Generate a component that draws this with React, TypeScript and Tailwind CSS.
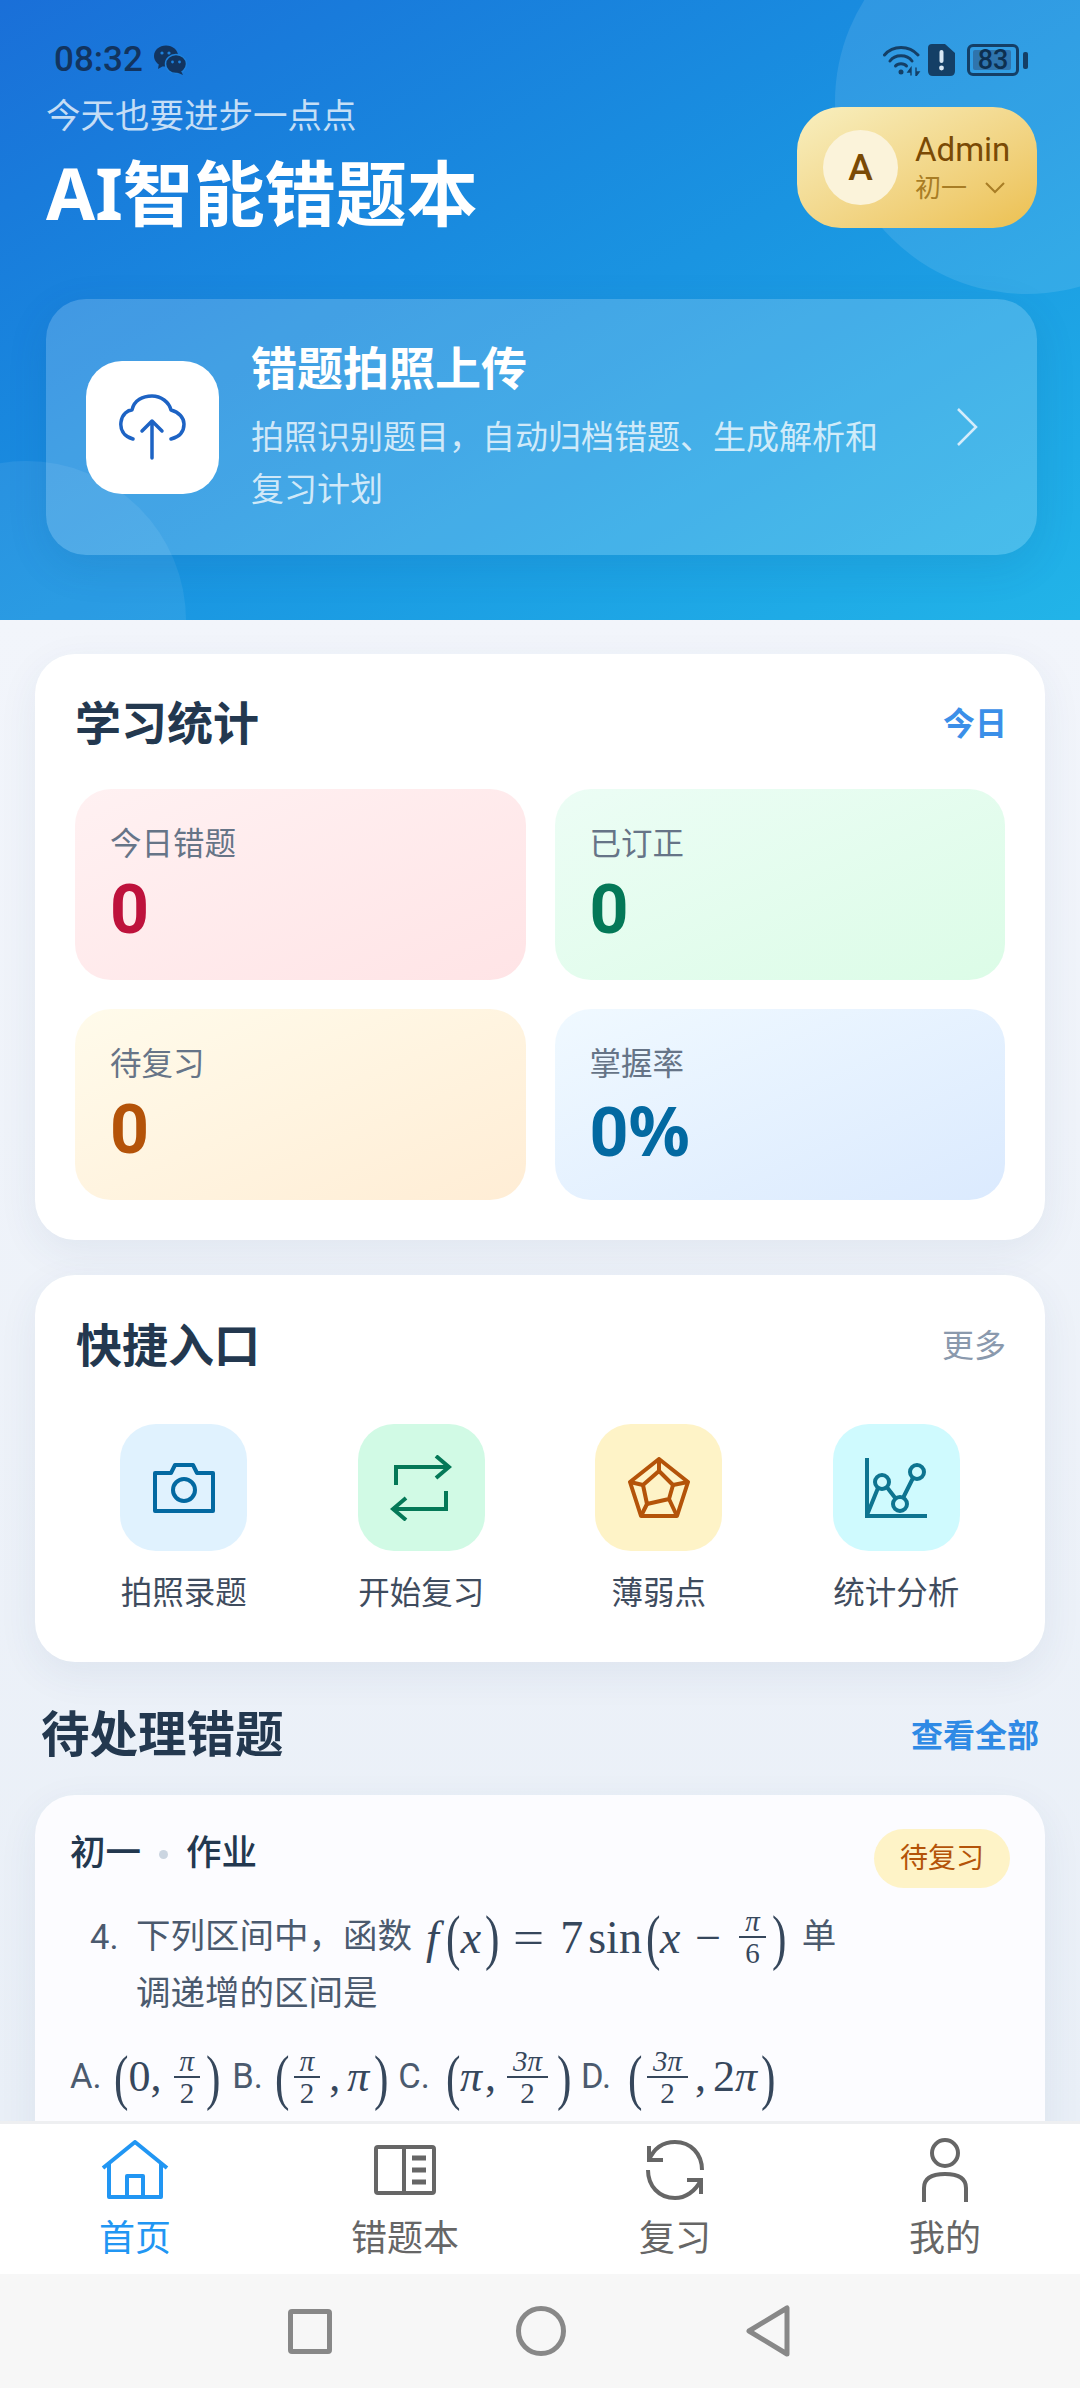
import React from 'react';

const sans = 'font-["Roboto","Noto_Sans_CJK_SC",sans-serif]';
const math = 'font-["Liberation_Serif","DejaVu_Serif",serif]';

const Frac: React.FC<{ top: string; bottom: string; className?: string }> = ({ top, bottom, className }) => (
    <span className={`inline-flex flex-col items-center text-[29px] leading-[26px] ${math} ${className ?? ''}`}>
        <span className="px-[6px] italic">{top}</span>
        <span className="block w-full h-[2px] bg-current my-[2px]" />
        <span className="px-[6px]">{bottom}</span>
    </span>
);

const Paren: React.FC<{ ch: string; className?: string }> = ({ ch, className }) => (
    <span className={`inline-flex w-[14px] justify-center text-[62px] leading-[62px] font-light ${math} ${className ?? ''}`}>
        <span className="inline-block scale-x-[0.7]">{ch}</span>
    </span>
);

const StatCard: React.FC<{ label: string; value: string; unit?: string; bg: string; color: string }> = ({ label, value, unit, bg, color }) => (
    <div className={`h-[191px] rounded-[36px] pl-[35px] pt-[34px] ${bg}`}>
        <div className="text-[31.5px] leading-[44px] text-[#667487]">{label}</div>
        <div className={`text-[68px] leading-[76px] font-bold mt-[5px] ${color}`}>
            {value}
            {unit && <span className='font-["Noto_Sans",sans-serif]'>{unit}</span>}
        </div>
    </div>
);

const QuickItem: React.FC<{ label: string; bg: string; children: React.ReactNode }> = ({ label, bg, children }) => (
    <div className="flex flex-col items-center">
        <div className={`w-[127px] h-[127px] rounded-[36px] flex items-center justify-center ${bg}`}>{children}</div>
        <div className="mt-[21px] text-[31.5px] leading-[44px] text-[#3f4c5e]">{label}</div>
    </div>
);

const NavItem: React.FC<{ label: string; active?: boolean; children: React.ReactNode }> = ({ label, active, children }) => (
    <div className={`flex flex-col items-center ${active ? 'text-[#2196f3]' : 'text-[#666666]'}`}>
        <div className="h-[72px] flex items-center justify-center">{children}</div>
        <div className="text-[36px] leading-[48px] mt-[9px]">{label}</div>
    </div>
);

const App: React.FC = () => {
    return (
        <div className={`w-[1080px] h-[2388px] flex flex-col overflow-hidden bg-[#eef3fa] ${sans}`}>
            {/* header */}
            <div className="relative h-[620px] shrink-0 overflow-hidden bg-gradient-to-br from-[#1a6fd8] to-[#22b4e8]">
                <div className="absolute left-[835px] top-[-90px] w-[384px] h-[384px] rounded-full bg-white/10" />
                <div className="absolute left-[-134px] top-[461px] w-[320px] h-[320px] rounded-full bg-white/[0.07]" />

                <div className="relative flex items-center justify-between h-[36px] mt-[42px] pl-[54px] pr-[52px] text-[#12345f]">
                    <div className="flex items-center gap-[11px]">
                        <span className="text-[35px] leading-[36px] font-medium">08:32</span>
                        <svg width="33" height="30" viewBox="0 0 33 30" fill="currentColor">
                            <ellipse cx="12" cy="11" rx="12" ry="10.5" />
                            <path d="M5 18 L4 24 L11 20Z" />
                            <ellipse cx="22" cy="19" rx="10.5" ry="9.5" stroke="#1f82dd" strokeWidth="1.5" />
                            <path d="M27 26 L29 30 L22 27Z" />
                            <circle cx="8" cy="8" r="1.6" fill="#1f82dd" />
                            <circle cx="15" cy="8" r="1.6" fill="#1f82dd" />
                            <circle cx="18.5" cy="17" r="1.4" fill="#1f82dd" />
                            <circle cx="25.5" cy="17" r="1.4" fill="#1f82dd" />
                        </svg>
                    </div>
                    <div className="flex items-center text-[#143f66]">
                        <svg width="38" height="32" viewBox="0 0 38 32" fill="none" stroke="currentColor" strokeWidth="3" strokeLinecap="round">
                            <path d="M1.5 11 C10 1 26 1 35 11" />
                            <path d="M7 17 C12 10 24 10 29 17" />
                            <path d="M12.5 22 C15 19 21 19 23.5 22" />
                            <circle cx="18" cy="28" r="2.5" fill="currentColor" stroke="none" />
                            <path d="M28 24 L25 28 H28Z M33 32 L36 28 H33Z M28 24 V31 M33 24 V31" strokeWidth="1.4" fill="currentColor" />
                        </svg>
                        <svg className="ml-[7px]" width="27" height="32" viewBox="0 0 27 32">
                            <path d="M4 0 H17 L27 9 V27 Q27 32 22 32 H5 Q0 32 0 27 V4 Q0 0 4 0Z" fill="#143f66" />
                            <rect x="11.5" y="6" width="4" height="13" rx="2" fill="#d8e8f5" />
                            <circle cx="13.5" cy="24" r="2.4" fill="#d8e8f5" />
                        </svg>
                        <div className="ml-[12px] w-[52px] h-[32px] rounded-[6px] border-[3px] border-[#143f66] p-[3px] relative">
                            <div className="h-full w-[38px] rounded-[2px] bg-[#2f74ad]" />
                            <span className="absolute inset-0 flex items-center justify-center text-[27px] leading-none text-[#0d2f50] font-medium">83</span>
                        </div>
                        <div className="ml-[4px] w-[5px] h-[17px] rounded-[2px] bg-[#143f66]" />
                    </div>
                </div>

                <div className="relative flex justify-between h-[121px] pl-[46px] pr-[43px] mt-[29px]">
                    <div className="mt-[-11px]">
                        <div className="text-[34.5px] leading-[40px] text-white/75">今天也要进步一点点</div>
                        <div className="text-[71px] leading-[84px] font-bold text-white mt-[15px]">
                            <span className='font-["Noto_Sans",sans-serif]'>AI</span>智能错题本
                        </div>
                    </div>
                    <div className="w-[240px] h-[121px] rounded-[44px] bg-gradient-to-br from-[#f8efbf] to-[#ecc04f] flex items-center pl-[26px]">
                        <div className="w-[75px] h-[75px] rounded-full bg-[#fbf3da] flex items-center justify-center text-[37px] font-medium text-[#7a4a05]">A</div>
                        <div className="ml-[17px]">
                            <div className="text-[33px] leading-[40px] text-[#7a4a05]">Admin</div>
                            <div className="flex items-center text-[26px] leading-[36px] text-[#a87d25]">
                                初一
                                <svg className="ml-[18px]" width="20" height="12" viewBox="0 0 20 12" fill="none" stroke="currentColor" strokeWidth="2">
                                    <path d="M1 1 L10 10 L19 1" />
                                </svg>
                            </div>
                        </div>
                    </div>
                </div>

                <div className="relative mx-[46px] mt-[71px] w-[991px] h-[256px] rounded-[40px] bg-white/[0.18] shadow-[0_12px_40px_rgba(20,70,130,0.12)] flex items-center pl-[40px]">
                    <div className="w-[133px] h-[133px] rounded-[36px] bg-white flex items-center justify-center shrink-0">
                        <svg width="67" height="66" viewBox="0 0 67 66" fill="none" stroke="#1d63c4" strokeWidth="3.5" strokeLinecap="round" strokeLinejoin="round">
                            <path d="M14 45 C4 42 1 35 2 28 C3 20 9 16 13 16 C15 6 24 2 33 2 C42 2 50 8 52 16 C60 18 65 24 65 30 C65 38 60 43 52 45" />
                            <path d="M33 64 V27 M23 37 L33 27 L43 37" />
                        </svg>
                    </div>
                    <div className="ml-[32px] w-[660px]">
                        <div className="text-[46px] leading-[60px] font-bold text-white">错题拍照上传</div>
                        <div className="text-[33px] leading-[52px] text-white/75 mt-[13px] w-[640px]">拍照识别题目，自动归档错题、生成解析和复习计划</div>
                    </div>
                    <svg className="ml-[45px]" width="22" height="38" viewBox="0 0 22 38" fill="none" stroke="#d4ecfb" strokeWidth="2.5">
                        <path d="M2 1 L20 19 L2 37" />
                    </svg>
                </div>
            </div>

            {/* content */}
            <div className="flex-1 overflow-hidden px-[35px] pt-[34px] bg-gradient-to-b from-[#f2f5fb] to-[#e9eff7]">
                <div className="rounded-[40px] bg-white shadow-[0_12px_40px_rgba(40,70,110,0.07)] px-[40px] pt-[40px] pb-[40px]">
                    <div className="flex items-center justify-between h-[60px] mb-[35px]">
                        <div className="text-[46px] font-bold text-[#23384f]">学习统计</div>
                        <div className="text-[32px] font-semibold text-[#3b8fe8] mr-[-2px]">今日</div>
                    </div>
                    <div className="grid grid-cols-2 gap-[29px]">
                        <StatCard label="今日错题" value="0" color="text-[#be123c]" bg="bg-gradient-to-br from-[#fff1f2] to-[#ffe4e6]" />
                        <StatCard label="已订正" value="0" color="text-[#047857]" bg="bg-gradient-to-br from-[#ecfdf5] to-[#dcfce7]" />
                        <StatCard label="待复习" value="0" color="text-[#b45309]" bg="bg-gradient-to-br from-[#fffbeb] to-[#ffedd5]" />
                        <StatCard label="掌握率" value="0" unit="%" color="text-[#0369a1]" bg="bg-gradient-to-br from-[#f0f9ff] to-[#dbeafe]" />
                    </div>
                </div>

                <div className="mt-[35px] rounded-[40px] bg-white shadow-[0_12px_40px_rgba(40,70,110,0.07)] px-[30px] pt-[41px] pb-[46px]">
                    <div className="flex items-center justify-between h-[60px] mb-[48px] pl-[11px] pr-[9px]">
                        <div className="text-[46px] font-bold text-[#23384f]">快捷入口</div>
                        <div className="text-[32px] text-[#8a99ad]">更多</div>
                    </div>
                    <div className="grid grid-cols-4">
                        <QuickItem label="拍照录题" bg="bg-[#e0f2fe]">
                            <svg width="62" height="50" viewBox="0 0 62 50" fill="none" stroke="#0369a1" strokeWidth="4" strokeLinejoin="round">
                                <path d="M2 10 H18 L22 2 H40 L44 10 H60 V48 H2Z" />
                                <circle cx="31" cy="27" r="11" />
                            </svg>
                        </QuickItem>
                        <QuickItem label="开始复习" bg="bg-[#d1fae5]">
                            <svg width="62" height="66" viewBox="0 0 62 66" fill="none" stroke="#047857" strokeWidth="4">
                                <path d="M6 30 V12 H58 M46 1 L59 12 L46 23" />
                                <path d="M56 36 V54 H4 M16 43 L3 54 L16 65" />
                            </svg>
                        </QuickItem>
                        <QuickItem label="薄弱点" bg="bg-[#fef3c7]">
                            <svg width="62" height="62" viewBox="0 0 62 62" fill="none" stroke="#b45309" strokeWidth="4" strokeLinejoin="round">
                                <path d="M31 2 L60 25 L49 59 H13 L2 25Z" />
                                <path d="M31 2 V14 M60 25 L45 28 M49 59 L41 42 M13 59 L19 47 M2 25 L15 28" />
                                <path d="M31 14 L45 28 L41 42 L19 47 L15 28Z" />
                            </svg>
                        </QuickItem>
                        <QuickItem label="统计分析" bg="bg-[#cffafe]">
                            <svg width="64" height="62" viewBox="0 0 64 62" fill="none" stroke="#0e7490" strokeWidth="4">
                                <path d="M3 1 V59 H63" />
                                <path d="M3 58 L14 31 M22 29 L32 42 M39 41 L49 21" />
                                <circle cx="18" cy="25" r="7" />
                                <circle cx="36" cy="47" r="7" />
                                <circle cx="53" cy="15" r="7" />
                            </svg>
                        </QuickItem>
                    </div>
                </div>

                <div className="flex items-center justify-between h-[60px] mt-[44px] mb-[29px] pl-[6px] pr-[6px]">
                    <div className="text-[48.5px] font-bold text-[#23384f]">待处理错题</div>
                    <div className="text-[32px] font-semibold text-[#2f8ae5]">查看全部</div>
                </div>

                <div className="rounded-[40px] bg-[#fcfcff] px-[35px] pt-[34px] h-[400px] shadow-[0_12px_40px_rgba(40,70,110,0.07)]">
                    <div className="flex items-start justify-between">
                        <div className="flex items-center h-[46px] mt-[2px] text-[35.5px] font-medium text-[#23384f]">
                            初一
                            <span className="mx-[18px] w-[9px] h-[9px] rounded-full bg-[#cbd5e1]" />
                            作业
                        </div>
                        <div className="w-[136px] h-[59px] rounded-full bg-[#fef3c7] flex items-center justify-center text-[28px] text-[#b45309]">待复习</div>
                    </div>

                    <div className="flex pl-[20px] mt-[19px] text-[34.5px] text-[#4b5a6e]">
                        <div className="w-[46px] h-[60px] leading-[60px]">4.</div>
                        <div>
                            <div className="flex items-center h-[60px] whitespace-nowrap">
                                下列区间中，函数
                                <span className={`ml-[14px] flex items-center text-[46px] text-[#36475c] ${math}`}>
                                    <i>f</i>
                                    <Paren ch="(" className="ml-[8px]" />
                                    <i>x</i>
                                    <Paren ch=")" className="ml-[4px]" />
                                    <span className="inline-block ml-[14px] w-[26px] origin-left scale-x-[1.2]">=</span>
                                    <span className="ml-[21px]">7</span>
                                    <span className="ml-[5px]">sin</span>
                                    <Paren ch="(" className="ml-[4px]" />
                                    <i>x</i>
                                    <span className="ml-[15px]">−</span>
                                    <Frac top="π" bottom="6" className="ml-[18px]" />
                                    <Paren ch=")" className="ml-[7px]" />
                                </span>
                                <span className="ml-[15px]">单</span>
                            </div>
                            <div className="leading-[52px]">调递增的区间是</div>
                        </div>
                    </div>

                    <div className="flex items-center h-[80px] mt-[18px] text-[34.5px] text-[#4b5a6e] whitespace-nowrap">
                        A.
                        <span className={`ml-[13px] flex items-center text-[44px] text-[#36475c] ${math}`}>
                            <Paren ch="(" />0<span>,</span>
                            <Frac top="π" bottom="2" className="ml-[12px]" />
                            <Paren ch=")" className="ml-[6px]" />
                        </span>
                        <span className="ml-[12px]">B.</span>
                        <span className={`ml-[13px] flex items-center text-[44px] text-[#36475c] ${math}`}>
                            <Paren ch="(" />
                            <Frac top="π" bottom="2" className="ml-[4px]" />
                            <span className="ml-[9px]">,</span>
                            <i className="ml-[7px]">π</i>
                            <Paren ch=")" className="ml-[5px]" />
                        </span>
                        <span className="ml-[10px]">C.</span>
                        <span className={`ml-[16px] flex items-center text-[44px] text-[#36475c] ${math}`}>
                            <Paren ch="(" />
                            <i>π</i>
                            <span className="ml-[3px]">,</span>
                            <Frac top="3π" bottom="2" className="ml-[11px]" />
                            <Paren ch=")" className="ml-[9px]" />
                        </span>
                        <span className="ml-[10px]">D.</span>
                        <span className={`ml-[17px] flex items-center text-[44px] text-[#36475c] ${math}`}>
                            <Paren ch="(" />
                            <Frac top="3π" bottom="2" className="ml-[5px]" />
                            <span className="ml-[7px]">,</span>
                            <span className="ml-[7px]">2<i>π</i></span>
                            <Paren ch=")" className="ml-[4px]" />
                        </span>
                    </div>
                </div>
            </div>

            {/* tab bar */}
            <div className="shrink-0 h-[153px] border-t-[3px] border-[#eeeff1] bg-white grid grid-cols-4 pt-[10px]">
                <NavItem label="首页" active>
                    <svg width="68" height="60" viewBox="0 0 68 60" fill="none" stroke="currentColor" strokeWidth="4" strokeLinejoin="round">
                        <path d="M2 28 L34 2 L66 28" />
                        <path d="M8 24 V57 H60 V24" />
                        <path d="M26 57 V36 H42 V57" />
                    </svg>
                </NavItem>
                <NavItem label="错题本">
                    <svg width="62" height="50" viewBox="0 0 62 50" fill="none" stroke="currentColor" strokeWidth="4">
                        <rect x="2" y="2" width="58" height="46" rx="2" />
                        <path d="M30 2 V48" />
                        <path d="M38 13 H52 M38 25 H52 M38 37 H52" strokeWidth="5" />
                    </svg>
                </NavItem>
                <NavItem label="复习">
                    <svg width="60" height="60" viewBox="0 0 60 60" fill="none" stroke="currentColor" strokeWidth="4">
                        <path d="M4 6 V20 H18" />
                        <path d="M4 20 C10 6 20 2 30 2 C46 2 57 14 57 30" />
                        <path d="M56 54 V40 H42" />
                        <path d="M56 40 C50 52 40 58 30 58 C14 58 3 46 3 30" />
                    </svg>
                </NavItem>
                <NavItem label="我的">
                    <svg width="46" height="64" viewBox="0 0 46 64" fill="none" stroke="currentColor" strokeWidth="4">
                        <circle cx="23" cy="15" r="13" />
                        <path d="M2 64 V50 C2 40 10 36 23 36 C36 36 44 40 44 50 V64" />
                    </svg>
                </NavItem>
            </div>

            {/* system nav */}
            <div className="shrink-0 h-[114px] bg-[#f7f7f7] flex items-center justify-center pr-[3px] text-[#888888]">
                <div className="w-[44px] h-[45px] rounded-[4px] border-[5px] border-[#888888]" />
                <div className="ml-[184px] w-[50px] h-[50px] rounded-full border-[5px] border-[#888888]" />
                <svg className="ml-[180px]" width="44" height="52" viewBox="0 0 44 52" fill="none" stroke="currentColor" strokeWidth="5" strokeLinejoin="round">
                    <path d="M41 3 V49 L3 26Z" />
                </svg>
            </div>
        </div>
    );
};

export default App;
